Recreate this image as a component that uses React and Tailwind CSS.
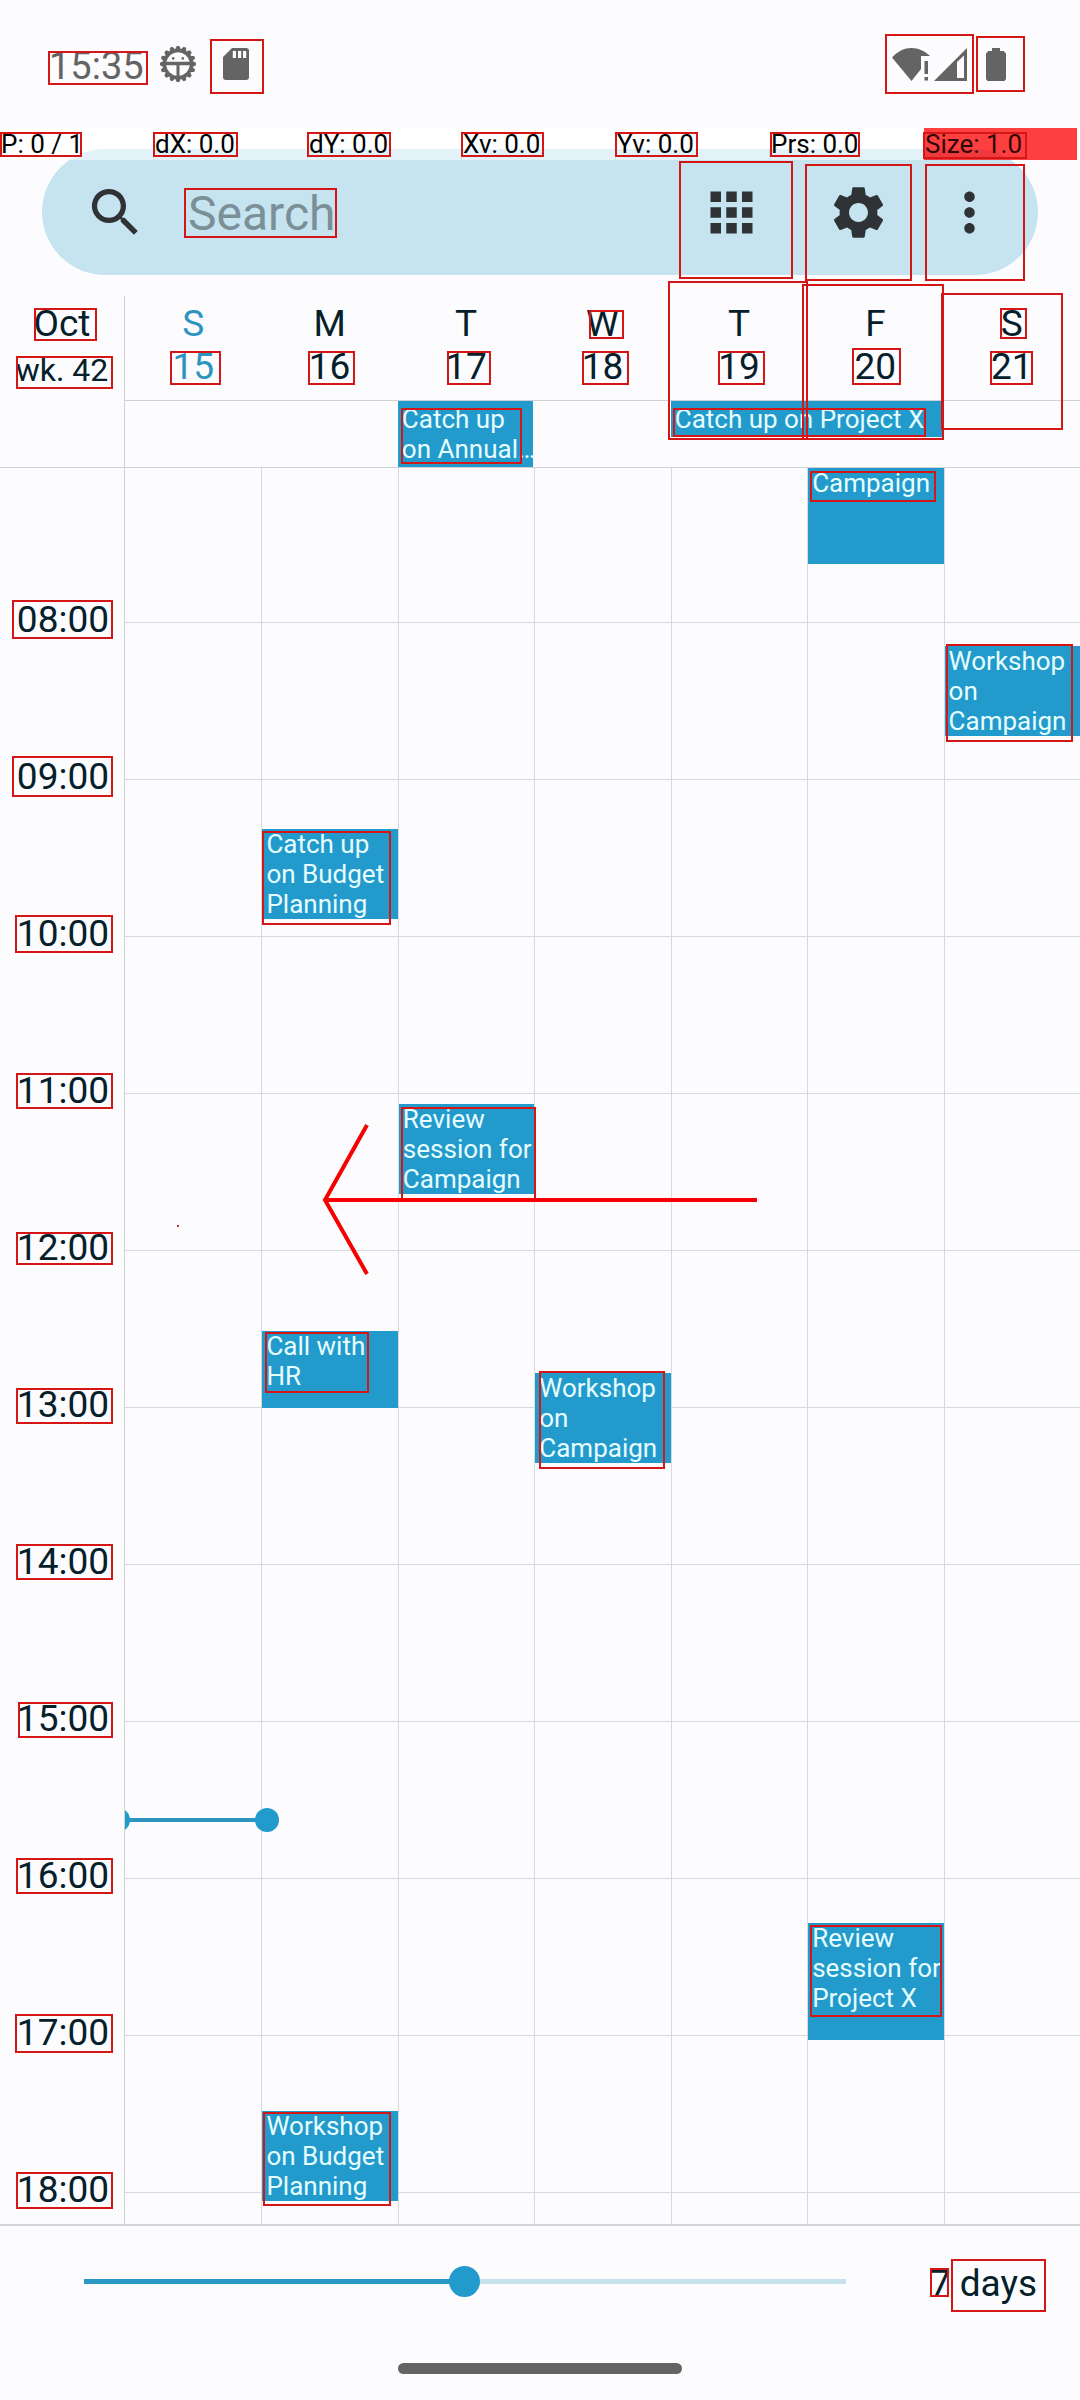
import React, { useState } from "react";
import { MdApps, MdMoreVert, MdSearch, MdSettings } from "react-icons/md";

const days = [
  { letter: "S", date: 15, today: true, events: [] },
  {
    letter: "M",
    date: 16,
    events: [
      { title: "Catch up on Budget Planning", place: "top-[361px] h-[90px]" },
      { title: "Call with HR", place: "top-[863px] h-[77px]" },
      { title: "Workshop on Budget Planning", place: "top-[1643px] h-[90px]" },
    ],
  },
  {
    letter: "T",
    date: 17,
    events: [{ title: "Review session for Campaign", place: "top-[636px] h-[90px]" }],
  },
  {
    letter: "W",
    date: 18,
    events: [{ title: "Workshop on Campaign", place: "top-[905px] h-[90px]" }],
  },
  { letter: "T", date: 19, events: [] },
  {
    letter: "F",
    date: 20,
    events: [
      { title: "Campaign", place: "top-0 h-[96px]" },
      { title: "Review session for Project X", place: "top-[1455px] h-[117px]" },
    ],
  },
  {
    letter: "S",
    date: 21,
    events: [{ title: "Workshop on Campaign", place: "top-[178px] h-[90px]" }],
  },
];

const hours = [
  "08:00", "09:00", "10:00", "11:00", "12:00", "13:00",
  "14:00", "15:00", "16:00", "17:00", "18:00",
];

const pointerStats = ["P: 0 / 1", "dX: 0.0", "dY: 0.0", "Xv: 0.0", "Yv: 0.0", "Prs: 0.0"];

// Highlight boxes: left, top, right, bottom.
const boxes = [
  [48, 51, 148, 85], [210, 39, 264, 94], [0, 132, 82, 157], [153, 132, 238, 157],
  [307, 132, 391, 157], [461, 132, 544, 157], [615, 132, 698, 157], [770, 132, 860, 157],
  [923, 132, 1027, 159], [184, 188, 337, 238], [885, 34, 974, 94], [976, 36, 1025, 92],
  [679, 161, 793, 279], [805, 164, 912, 281], [925, 164, 1025, 281],
  [668, 281, 808, 440], [802, 284, 944, 440], [941, 293, 1063, 430],
  [34, 308, 97, 341], [16, 356, 113, 389], [170, 351, 221, 385], [308, 351, 355, 385],
  [447, 351, 491, 385], [589, 310, 624, 339], [582, 351, 629, 385], [718, 351, 765, 385],
  [852, 348, 901, 385], [990, 351, 1033, 385], [1000, 308, 1027, 339],
  [401, 408, 522, 464], [673, 408, 926, 437], [810, 471, 936, 502],
  [12, 600, 113, 639], [12, 756, 113, 797], [15, 915, 113, 953], [16, 1073, 113, 1109],
  [16, 1232, 113, 1265], [16, 1388, 113, 1424], [16, 1544, 113, 1580],
  [18, 1702, 113, 1738], [16, 1858, 113, 1894], [15, 2014, 113, 2053], [16, 2172, 113, 2209],
  [262, 831, 391, 925], [946, 644, 1073, 742], [401, 1107, 536, 1201], [265, 1332, 369, 1393],
  [539, 1371, 665, 1469], [263, 2112, 391, 2206], [810, 1925, 942, 2017],
  [930, 2268, 949, 2297], [951, 2259, 1046, 2312],
];

function BugIcon() {
  const teeth = Array.from({ length: 16 }, (_, i) => i * 22.5);
  return (
    <svg viewBox="-18 -18 36 36" className="size-9" fill="#646464" aria-hidden="true">
      {teeth.map((angle) => (
        <path key={angle} d="M-3.2 -14 L-1.3 -18 H1.3 L3.2 -14 Z" transform={`rotate(${angle})`} />
      ))}
      <circle r="14.8" />
      <path d="M-11.6 -2.2 A11.8 11.8 0 0 1 11.6 -2.2 Z" fill="#fcfcff" />
      <path d="M-11.8 1.2 H-1.5 V11.7 A11.8 11.8 0 0 1 -11.8 1.2 Z" fill="#fcfcff" />
      <path d="M11.8 1.2 H1.5 V11.7 A11.8 11.8 0 0 0 11.8 1.2 Z" fill="#fcfcff" />
      <circle cx="-4.8" cy="-5.6" r="1.3" />
      <circle cx="4.8" cy="-5.6" r="1.3" />
    </svg>
  );
}

function SdCardIcon() {
  return (
    <svg viewBox="0 0 26 32" className="h-8 w-[26px]" aria-hidden="true">
      <path d="M9 0 H23 A3 3 0 0 1 26 3 V29 A3 3 0 0 1 23 32 H3 A3 3 0 0 1 0 29 V9 Z" fill="#646464" />
      <path d="M9.8 3 H13 V10 H9.8 Z M15 3 H18.2 V10 H15 Z M20 3 H23.2 V10 H20 Z" fill="#fcfcff" />
    </svg>
  );
}

function StatusBar() {
  return (
    <div className="flex h-[128px] items-center pl-[49px] pr-[74px] text-[#646464]">
      <span className="mt-1 text-[38px] leading-[43px]">15:35</span>
      <span className="ml-4"><BugIcon /></span>
      <span className="ml-[27px]"><SdCardIcon /></span>
      <span className="ml-auto flex items-center">
        <svg viewBox="0 0 38 33" className="h-[33px] w-[38px]" fill="currentColor" aria-hidden="true">
          <path d="M0 9.5 C6 3 12.500 0 19.500 0 C26.500 0 33 3 38 8 H29 V21 L19.500 33 Z" />
          <path d="M32.500 13 H36 V26 H32.500 Z M32.500 29 H36 V32.500 H32.500 Z" />
        </svg>
        <svg viewBox="0 0 33 33" className="ml-1 h-[33px] w-[33px]" fill="currentColor" fillRule="evenodd" aria-hidden="true">
          <path d="M0 33 L33 0 V33 Z M23 14 V30 H30 V7.500 Z" />
        </svg>
        <svg viewBox="0 0 20 33" className="ml-[19px] h-[33px] w-5" fill="currentColor" aria-hidden="true">
          <path d="M6 0 H14 V3 H17.500 L20 5.500 V31 L18.500 33 H1.500 L0 31 V5.500 L2.500 3 H6 Z" />
        </svg>
      </span>
    </div>
  );
}

function PointerBar() {
  return (
    <div className="absolute inset-x-0 top-[128px] grid h-8 grid-cols-7 gap-px pr-[3px] text-[26px] leading-8 text-black">
      {pointerStats.map((text) => (
        <span key={text} className="bg-white/50 pl-px">{text}</span>
      ))}
      <span className="bg-[#ff0000]/75 pl-px text-[#300808]">Size: 1.0</span>
    </div>
  );
}

function SearchBar() {
  return (
    <form
      role="search"
      onSubmit={(e) => e.preventDefault()}
      className="mx-[42px] mt-[21px] flex h-[126px] items-center rounded-full bg-[#c5e4f0] pl-[42px] pr-[37px] text-[#2f3335]"
    >
      <MdSearch className="size-[63px] shrink-0" aria-hidden="true" />
      <input
        type="text"
        aria-label="Search"
        placeholder="Search"
        className="ml-[41px] mt-[3px] h-[63px] min-w-0 flex-1 bg-transparent text-[48px] outline-none placeholder:text-[#7b8f97]"
      />
      <button type="button" aria-label="Change view"><MdApps className="size-[63px]" /></button>
      <button type="button" aria-label="Settings" className="ml-16"><MdSettings className="size-[63px]" /></button>
      <button type="button" aria-label="More options" className="ml-12"><MdMoreVert className="size-[63px]" /></button>
    </form>
  );
}

function WeekHeader() {
  return (
    <div className="mt-[21px] flex text-[37px] leading-[43px]">
      <div className="w-[124px] shrink-0 pt-[6px] text-center">
        <div>Oct</div>
        <div className="mt-1 text-[32px]">wk. 42</div>
      </div>
      <div className="grid h-[105px] flex-1 grid-cols-7 border-b border-l border-[#d0d1d3] pt-[6px] text-center">
        {days.map((d) => (
          <div key={d.date} className={d.today ? "text-[#2b94bf]" : ""}>
            <div>{d.letter}</div>
            <div>{d.date}</div>
          </div>
        ))}
      </div>
    </div>
  );
}

function AllDayRow() {
  return (
    <div className="flex border-b border-[#d0d1d3] text-[26px] leading-[30px] text-[#e6fdff]">
      <div className="w-[124px] shrink-0" />
      <div className="grid h-[66px] flex-1 grid-cols-7 items-start border-l border-[#d0d1d3]">
        <button type="button" className="col-start-3 mr-px h-[66px] whitespace-nowrap bg-[#229acc] pb-1 pl-1 pt-[3px] text-left">
          Catch up<br />on Annual…
        </button>
        <button type="button" className="col-span-2 col-start-5 row-start-1 mr-[2px] h-9 bg-[#229acc] pb-1 pl-1 pt-[3px] text-left">
          Catch up on Project X
        </button>
      </div>
    </div>
  );
}

function WeekGrid() {
  return (
    <div className="flex border-b-2 border-[#d3d4d6]">
      <ol className="w-[124px] shrink-0 pr-[15px] text-right text-[37px] leading-[38px]">
        {hours.map((h) => (
          <li key={h} className="flex h-[157px] items-end justify-end first:h-[155px]">
            <time className="translate-y-4">{h}</time>
          </li>
        ))}
      </ol>
      <div className="relative flex-1 overflow-hidden border-l border-[#d0d1d3]">
        <div className="pb-[31px]">
          {hours.map((h) => (
            <div key={h} className="h-[157px] border-b border-[#d8d9db] first:h-[155px]" />
          ))}
        </div>
        <div className="absolute inset-0 grid grid-cols-7 text-[26px] leading-[30px] text-[#e6fdff]">
          {days.map((d) => (
            <div key={d.date} className="relative border-l border-[#d8d9db] first:border-l-0">
              {d.events.map((e) => (
                <button
                  key={e.title}
                  type="button"
                  className={`absolute inset-x-0 flex items-start bg-[#229acc] pl-1 text-left ${e.place}`}
                >
                  {e.title}
                </button>
              ))}
              {d.today && (
                <div className="absolute left-[-7px] right-[-6px] top-[1350px] h-1 bg-[#2b94bf]">
                  <span className="absolute left-[-12px] top-[-10px] size-6 rounded-full bg-[#229acc]" />
                  <span className="absolute right-[-12px] top-[-10px] z-10 size-6 rounded-full bg-[#229acc]" />
                </div>
              )}
            </div>
          ))}
        </div>
      </div>
    </div>
  );
}

function DaysSlider() {
  const [count, setCount] = useState(7);
  const percent = ((count - 1) / 12) * 100;
  return (
    <div className="flex h-[110px] items-center gap-[84px] pl-[84px] pr-[43px]">
      <input
        id="day-count"
        type="range"
        min="1"
        max="13"
        value={count}
        onChange={(e) => setCount(Number(e.target.value))}
        style={{
          backgroundImage: `linear-gradient(to right, #2b97c4 ${percent}%, #c5e2ee ${percent}%)`,
        }}
        className="h-[5px] min-w-0 flex-1 appearance-none [&::-webkit-slider-thumb]:size-[31px] [&::-webkit-slider-thumb]:appearance-none [&::-webkit-slider-thumb]:rounded-full [&::-webkit-slider-thumb]:bg-[#229acc]"
      />
      <label htmlFor="day-count" className="mt-1 whitespace-nowrap text-[37px] leading-[43px]">
        {count} days
      </label>
    </div>
  );
}

function Annotations() {
  return (
    <svg
      className="pointer-events-none absolute left-0 top-0 h-[2400px] w-[1080px]"
      viewBox="0 0 1080 2400"
      fill="none"
      aria-hidden="true"
    >
      <g stroke="#d51616" strokeWidth="2">
        {boxes.map(([l, t, r, b]) => (
          <rect key={`${l}-${t}`} x={l + 1} y={t + 1} width={r - l - 2} height={b - t - 2} />
        ))}
      </g>
      <path d="M757 1200 H325 M367 1125 L325 1200 L367 1274" stroke="#f80000" strokeWidth="4" />
      <rect x="177" y="1225" width="2" height="2" fill="#c03030" />
    </svg>
  );
}

export default function App() {
  return (
    <div className="relative min-h-screen overflow-hidden bg-[#fcfcff] font-['Roboto',sans-serif] text-[#06202b]">
      <StatusBar />
      <SearchBar />
      <PointerBar />
      <main>
        <WeekHeader />
        <AllDayRow />
        <WeekGrid />
      </main>
      <DaysSlider />
      <div className="mx-auto mb-[26px] mt-[27px] h-[11px] w-[284px] rounded-full bg-[#646464]" />
      <Annotations />
    </div>
  );
}
